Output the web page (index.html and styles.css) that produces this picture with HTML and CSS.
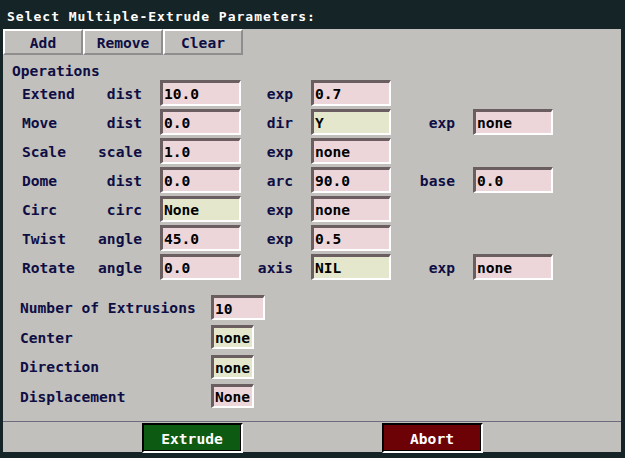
FILE: index.html
```html
<!DOCTYPE html>
<html>
<head>
<meta charset="utf-8">
<link rel="stylesheet" href="styles.css">
</head>
<body>
<div class="title">Select Multiple-Extrude Parameters:</div>
<div class="panel">
  <div class="toolbar">
    <div class="tb-btn">Add</div>
    <div class="tb-btn">Remove</div>
    <div class="tb-btn">Clear</div>
  </div>
  <div class="main">
    <div class="section-label">Operations</div>
    <div class="ops">
      <div class="op">Extend</div><div class="arg">dist</div><div class="field pink">10.0</div>
      <div class="arg">exp</div><div class="field pink">0.7</div><div></div><div></div>

      <div class="op">Move</div><div class="arg">dist</div><div class="field pink">0.0</div>
      <div class="arg">dir</div><div class="field yellow">Y</div><div class="arg">exp</div><div class="field pink">none</div>

      <div class="op">Scale</div><div class="arg">scale</div><div class="field pink">1.0</div>
      <div class="arg">exp</div><div class="field pink">none</div><div></div><div></div>

      <div class="op">Dome</div><div class="arg">dist</div><div class="field pink">0.0</div>
      <div class="arg">arc</div><div class="field pink">90.0</div><div class="arg">base</div><div class="field pink">0.0</div>

      <div class="op">Circ</div><div class="arg">circ</div><div class="field yellow">None</div>
      <div class="arg">exp</div><div class="field pink">none</div><div></div><div></div>

      <div class="op">Twist</div><div class="arg">angle</div><div class="field pink">45.0</div>
      <div class="arg">exp</div><div class="field pink">0.5</div><div></div><div></div>

      <div class="op">Rotate</div><div class="arg">angle</div><div class="field pink">0.0</div>
      <div class="arg">axis</div><div class="field yellow">NIL</div><div class="arg">exp</div><div class="field pink">none</div>
    </div>
    <div class="params">
      <div class="op">Number of Extrusions</div><div class="field pink wide first">10</div>
      <div class="op">Center</div><div class="field yellow narrow">none</div>
      <div class="op">Direction</div><div class="field yellow narrow">none</div>
      <div class="op">Displacement</div><div class="field pink narrow">None</div>
    </div>
  </div>
  <div class="footer">
    <div class="act green">Extrude</div>
    <div class="act red">Abort</div>
  </div>
</div>
</body>
</html>
```
FILE: styles.css
```css
html, body {
  margin: 0;
  padding: 0;
}
body {
  width: 625px;
  height: 458px;
  overflow: hidden;
  background: #152426;
  font-family: "DejaVu Sans Mono", "Liberation Mono", monospace;
  font-weight: bold;
  font-size: 14.6px;
  color: #0e0e44;
}
.title {
  height: 29px;
  box-sizing: border-box;
  padding: 9px 0 0 7px;
  font-size: 13px;
  line-height: 16px;
  letter-spacing: 1px;
  color: #ffffff;
}
.panel {
  margin-left: 3px;
  width: 618px;
  height: 423px;
  background: #c2c0bc;
  display: flex;
  flex-direction: column;
}
.toolbar {
  display: flex;
  height: 26px;
}
.tb-btn {
  width: 80px;
  height: 26px;
  box-sizing: border-box;
  border-top: 2px solid #ffffff;
  border-left: 2px solid #ffffff;
  border-right: 2px solid #8f8d8d;
  border-bottom: 2px solid #8f8d8d;
  display: flex;
  align-items: center;
  justify-content: center;
  line-height: 17px;
}
.main {
  flex: 1;
  padding-left: 9px;
}
.section-label {
  margin-top: 7px;
  line-height: 17px;
  height: 17px;
}
.ops {
  margin-top: 1px;
  margin-left: 10px;
  display: grid;
  grid-template-columns: 76px 62px 81px 70px 80px 82px 80px;
  grid-auto-rows: 26px;
  row-gap: 3px;
  line-height: 17px;
}
.op {
  display: flex;
  align-items: center;
}
.arg {
  display: flex;
  align-items: center;
  justify-content: flex-end;
  padding-right: 18px;
}
.field {
  box-sizing: border-box;
  border-top: 3px solid #6a5e60;
  border-left: 3px solid #6a5e60;
  border-right: 2px solid #ffffff;
  border-bottom: 2px solid #ffffff;
  padding-left: 1px;
  display: flex;
  align-items: center;
  color: #000000;
  white-space: nowrap;
  overflow: hidden;
}
.pink { background: #ecd6da; }
.yellow { background: #e4e7cb; }
.params {
  margin-top: 15px;
  margin-left: 8px;
  display: grid;
  grid-template-columns: 191px auto;
  grid-auto-rows: 25px;
  row-gap: 4.5px;
  line-height: 17px;
  justify-items: start;
}
.params .field {
  height: 24px;
  align-self: center;
}
.params .first { height: 25px; }
.wide { width: 54px; }
.narrow { width: 43px; }
.footer {
  height: 31px;
  box-sizing: border-box;
  border-top: 1px solid #6c6c7e;
  display: flex;
  justify-content: center;
  gap: 139px;
  padding-top: 1px;
  position: relative;
  overflow: visible;
}
.act {
  width: 101px;
  height: 30px;
  box-sizing: border-box;
  border: 2px solid #000000;
  border-right-color: #ffffff;
  border-bottom-color: #ffffff;
  box-shadow: inset -1px -1px 0 #000000;
  display: flex;
  align-items: center;
  justify-content: center;
  color: #ffffff;
  line-height: 17px;
}
.green { background: #0d5a12; }
.red { background: #6c0206; }
```
